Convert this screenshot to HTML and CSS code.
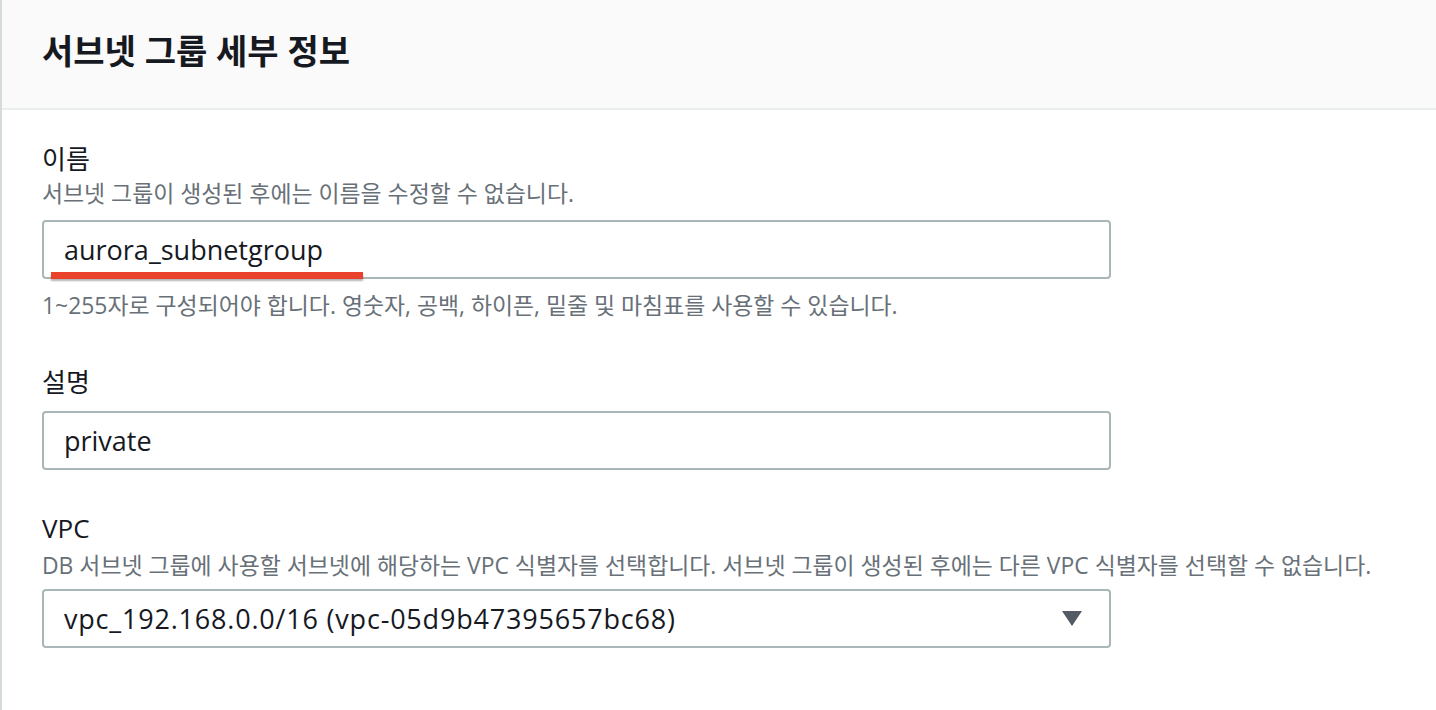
FILE: index.html
```html
<!DOCTYPE html>
<html lang="ko">
<head>
	<meta charset="utf-8">
	<title>서브넷 그룹 세부 정보</title>
	<link rel="stylesheet" href="styles.css">
</head>
<body>
	<div class="panel">
		<div class="panel-header">
			<h2>서브넷 그룹 세부 정보</h2>
		</div>

		<div class="panel-body">
			<!-- 이름 -->
			<div class="field">
				<label class="field-label" for="name">이름</label>
				<div class="field-desc">서브넷 그룹이 생성된 후에는 이름을 수정할 수 없습니다.</div>
				<div class="input-wrap">
					<input class="text-input" id="name" type="text" value="aurora_subnetgroup">
					<span class="mark"></span>
				</div>
				<div class="field-hint">1~255자로 구성되어야 합니다. 영숫자, 공백, 하이픈, 밑줄 및 마침표를 사용할 수 있습니다.</div>
			</div>

			<!-- 설명 -->
			<div class="field field-short">
				<label class="field-label" for="desc">설명</label>
				<div class="input-wrap">
					<input class="text-input" id="desc" type="text" value="private">
				</div>
			</div>

			<!-- VPC -->
			<div class="field">
				<div class="field-label">VPC</div>
				<div class="field-desc desc-vpc">DB 서브넷 그룹에 사용할 서브넷에 해당하는 VPC 식별자를 선택합니다. 서브넷 그룹이 생성된 후에는 다른 VPC 식별자를 선택할 수 없습니다.</div>
				<div class="select">
					<span class="select-value">vpc_192.168.0.0/16 (vpc-05d9b47395657bc68)</span>
					<svg class="caret" width="20" height="15" viewBox="0 0 20 15">
						<path d="M0 0 H20 L10 15 Z" fill="#545b64"/>
					</svg>
				</div>
			</div>
		</div>
	</div>
</body>
</html>
```

FILE: styles.css
```css
body {
	margin: 0;
	padding: 0;
	background: #fff;
	font-family: "Open Sans", "Noto Sans CJK KR", sans-serif;
	color: #16191f;
}

.panel {
	border-left: 2px solid #d5dbdb;
	min-height: 710px;
	box-sizing: border-box;
}

.panel-header {
	height: 110px;
	box-sizing: border-box;
	background-color: #fafafa;
	border-bottom: 2px solid #eaeded;
	display: flex;
	align-items: center;
	padding: 0 40px 6px;
}

.panel-header h2 {
	margin: 0;
	font-size: 34px;
	font-weight: bold;
	line-height: 40px;
}

.panel-body {
	padding: 33px 40px 0;
}

.field {
	width: 1069px;
	margin-bottom: 46px;
}

.field-short {
	margin-bottom: 42px;
}

.field-label {
	display: block;
	font-size: 26px;
	line-height: 32px;
}

.field-desc,
.field-hint {
	font-size: 22.9px;
	line-height: 28px;
	color: #687078;
	white-space: nowrap;
}

.field-desc {
	margin-top: 5px;
}

.desc-vpc {
	margin-top: 8px;
}

.field-hint {
	margin-top: 13px;
}

.input-wrap {
	position: relative;
	margin-top: 12px;
}

.field-label + .input-wrap {
	margin-top: 13px;
}

.text-input,
.select {
	display: flex;
	align-items: center;
	width: 100%;
	height: 59px;
	box-sizing: border-box;
	border: 2px solid #aab7b8;
	border-radius: 4px;
	padding: 0 27px 0 20px;
	font-family: "Open Sans", "Noto Sans CJK KR", sans-serif;
	font-size: 27px;
	color: #16191f;
	background: #fff;
	outline: none;
}

.select {
	justify-content: space-between;
	margin-top: 9px;
}

.select-value {
	letter-spacing: 0.8px;
}

.caret {
	display: block;
}

/* 빨간 밑줄 표시 */
.mark {
	position: absolute;
	left: 9px;
	top: 52px;
	width: 312px;
	height: 7px;
	background-color: #e9412c;
	box-shadow: 0 2px 2px rgba(0, 0, 0, 0.3);
}
```
